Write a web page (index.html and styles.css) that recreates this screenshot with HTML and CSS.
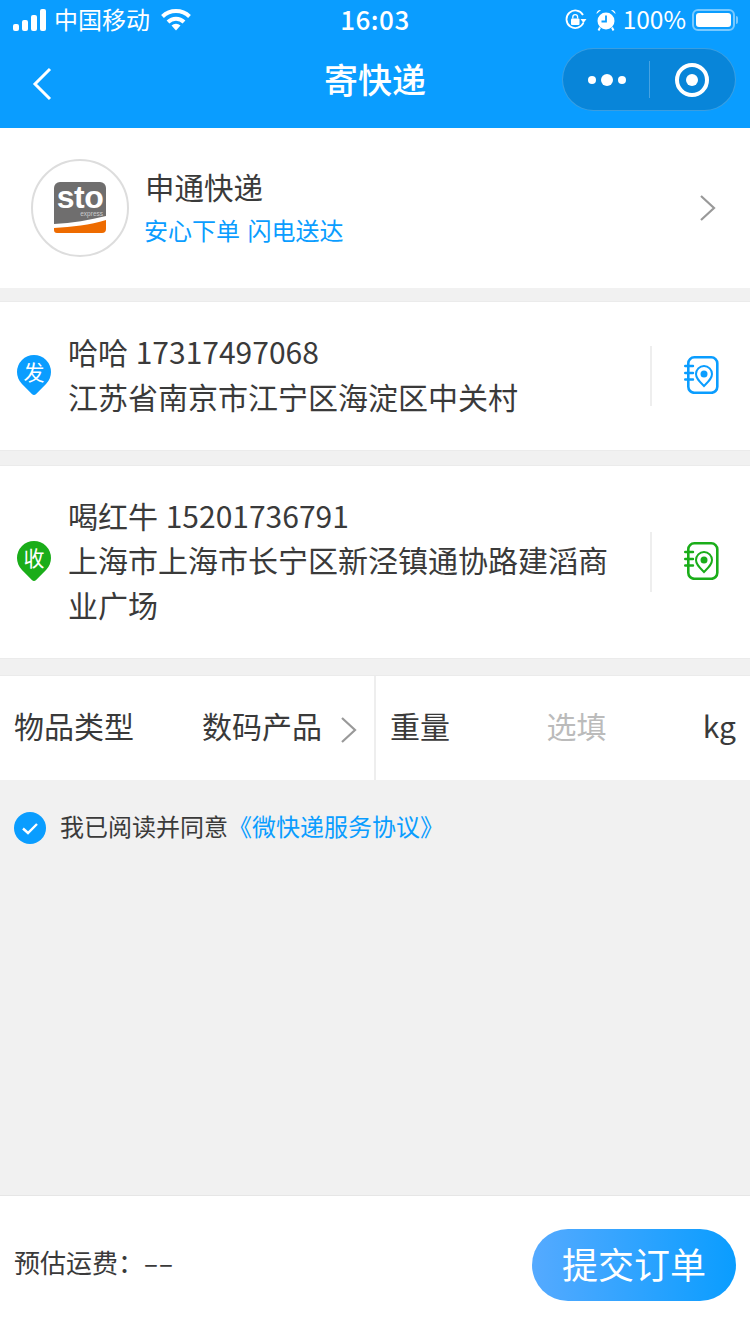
FILE: index.html
```html
<!DOCTYPE html>
<html lang="zh-CN">
<head>
    <meta charset="UTF-8">
    <meta name="viewport" content="width=device-width, initial-scale=1.0">
    <title>寄快递</title>
    <link rel="stylesheet" href="styles.css">
</head>
<body>
<div class="page">
    <header class="top">
        <div class="status-bar">
            <div class="status-left">
                <svg class="signal" width="33" height="22" viewBox="0 0 33 22">
                    <rect x="0" y="15" width="6" height="7" rx="2"/>
                    <rect x="9" y="11" width="6" height="11" rx="2"/>
                    <rect x="18" y="6" width="6" height="16" rx="2"/>
                    <rect x="27" y="0" width="6" height="22" rx="2"/>
                </svg>
                <span class="carrier">中国移动</span>
                <svg class="wifi" width="30" height="22" viewBox="0 0 30 22">
                    <path d="M1.500 7.500 A19.500 19.500 0 0 1 28.500 7.500" fill="none" stroke="#fff" stroke-width="4"/>
                    <path d="M7 13 A11.500 11.500 0 0 1 23 13" fill="none" stroke="#fff" stroke-width="4"/>
                    <path d="M10.500 16.500 A6.500 6.500 0 0 1 19.500 16.500 L15 21.500 Z" fill="#fff"/>
                </svg>
            </div>
            <div class="status-time">16:03</div>
            <div class="status-right">
                <svg width="22" height="22" viewBox="0 0 22 22">
                    <path d="M18.500 13.500 A8.800 8.800 0 1 1 18 6" fill="none" stroke="#fff" stroke-width="1.800"/>
                    <path d="M15.500 10 L21.500 10 L18.500 14 Z" fill="#fff"/>
                    <rect x="6" y="9.500" width="8.500" height="6.500" rx="1" fill="#fff"/>
                    <path d="M7.800 9.500 V8 a2.400 2.400 0 0 1 4.800 0 V9.500" fill="none" stroke="#fff" stroke-width="1.300"/>
                </svg>
                <svg class="alarm" width="20" height="22" viewBox="0 0 20 22">
                    <circle cx="10" cy="12" r="8.500" fill="#fff"/>
                    <path d="M10 6.500 V12.500 H5.500" fill="none" stroke="#0a9dff" stroke-width="1.800"/>
                    <path d="M0.500 5 A3.800 3.800 0 0 1 5 1 Z M19.500 5 A3.800 3.800 0 0 0 15 1 Z" fill="#fff"/>
                    <path d="M4 18.500 L2.500 21.500 M16 18.500 L17.500 21.500" stroke="#fff" stroke-width="2"/>
                </svg>
                <span class="battery-text">100%</span>
                <div class="battery"><div class="battery-fill"></div></div>
                <div class="battery-nub"></div>
            </div>
        </div>
        <div class="nav-bar">
            <svg class="nav-back" width="20" height="34" viewBox="0 0 20 34">
                <path d="M18 2 L3 17 L18 32" fill="none" stroke="#fff" stroke-width="3"/>
            </svg>
            <div class="nav-title">寄快递</div>
            <div class="capsule">
                <div class="capsule-more">
                    <span class="dot"></span><span class="dot dot-big"></span><span class="dot"></span>
                </div>
                <div class="capsule-line"></div>
                <div class="capsule-close"><span class="ring"></span></div>
            </div>
        </div>
    </header>

    <section class="company">
        <div class="company-logo">
            <svg class="logo-mark" width="52" height="52" viewBox="0 0 52 52">
                <path d="M6 0 H46 a6 6 0 0 1 6 6 V34 C36 38 18 41 0 42 V6 a6 6 0 0 1 6 -6 Z" fill="#6f6e6e"/>
                <path d="M52 38 V47 a4 4 0 0 1 -4 4 H3 a3 3 0 0 1 -3 -3 V46 C18 45 36 43 52 38 Z" fill="#ee6b00"/>
                <text class="logo-name" x="26" y="26" text-anchor="middle">sto</text>
                <text class="logo-sub" x="49" y="33.500" text-anchor="end">express</text>
            </svg>
        </div>
        <div class="company-info">
            <div class="company-name">申通快递</div>
            <div class="company-slogan">安心下单 闪电送达</div>
        </div>
        <svg class="company-arrow" width="18" height="28" viewBox="0 0 18 28">
            <path d="M2 2 L15 14 L2 26" fill="none" stroke="#999" stroke-width="2.200"/>
        </svg>
    </section>

    <section class="address address-send">
        <div class="pin pin-blue"><span class="pin-text">发</span></div>
        <div class="address-text">
            <div>哈哈 17317497068</div>
            <div>江苏省南京市江宁区海淀区中关村</div>
        </div>
        <div class="address-book book-blue">
            <svg class="book-icon" width="38" height="38" viewBox="0 0 38 38">
                <rect x="4.300" y="1.300" width="29" height="35.500" rx="6" fill="none" stroke="currentColor" stroke-width="2.600"/>
                <path d="M1.200 10 H9 M1.200 17 H9 M1.200 23.500 H9" stroke="currentColor" stroke-width="2.400" stroke-linecap="round"/>
                <path d="M20 30 C15.500 25.500 12 22.500 12 18 a8 8 0 0 1 16 0 C28 22.500 24.500 25.500 20 30 Z" fill="none" stroke="currentColor" stroke-width="2"/>
                <circle cx="20" cy="18" r="3.500" fill="currentColor"/>
            </svg>
        </div>
    </section>

    <section class="address address-receive">
        <div class="pin pin-green"><span class="pin-text">收</span></div>
        <div class="address-text">
            <div>喝红牛 15201736791</div>
            <div>上海市上海市长宁区新泾镇通协路建滔商业广场</div>
        </div>
        <div class="address-book book-green">
            <svg class="book-icon" width="38" height="38" viewBox="0 0 38 38">
                <rect x="4.300" y="1.300" width="29" height="35.500" rx="6" fill="none" stroke="currentColor" stroke-width="2.600"/>
                <path d="M1.200 10 H9 M1.200 17 H9 M1.200 23.500 H9" stroke="currentColor" stroke-width="2.400" stroke-linecap="round"/>
                <path d="M20 30 C15.500 25.500 12 22.500 12 18 a8 8 0 0 1 16 0 C28 22.500 24.500 25.500 20 30 Z" fill="none" stroke="currentColor" stroke-width="2"/>
                <circle cx="20" cy="18" r="3.500" fill="currentColor"/>
            </svg>
        </div>
    </section>

    <section class="goods">
        <div class="goods-type">
            <span>物品类型</span>
            <span class="goods-value">数码产品</span>
            <svg class="goods-arrow" width="18" height="28" viewBox="0 0 18 28">
                <path d="M2 2 L15 14 L2 26" fill="none" stroke="#999" stroke-width="2.200"/>
            </svg>
        </div>
        <div class="goods-weight">
            <span>重量</span>
            <span class="goods-placeholder">选填</span>
            <span>kg</span>
        </div>
    </section>

    <div class="agree">
        <svg class="agree-check" width="32" height="32" viewBox="0 0 32 32">
            <circle cx="16" cy="16" r="16" fill="#0a9dff"/>
            <path d="M9 16.500 L14 21 L23 12" fill="none" stroke="#fff" stroke-width="2.400"/>
        </svg>
        <div class="agree-text">我已阅读并同意<span class="agree-link">《微快递服务协议》</span></div>
    </div>

    <footer class="bottom">
        <div class="price">预估运费：<span class="price-value">––</span></div>
        <div class="submit">提交订单</div>
    </footer>
</div>
</body>
</html>
```

FILE: styles.css
```css
:root {
    --blue: #0a9dff;
    --green: #1aad19;
    --text: #3a3a3a;
    --page-bg: #f1f1f1;
    --line: #ebebeb;
    --font-cn: "Noto Sans CJK SC", "Noto Sans", sans-serif;
}
body {
    margin: 0;
    font-family: var(--font-cn);
    color: var(--text);
    background-color: var(--page-bg);
}
.page {
    width: 750px;
    height: 1334px;
    display: flex;
    flex-direction: column;
    overflow: hidden;
}

/* status bar + title bar */
.top {
    background: var(--blue);
    color: #fff;
    height: 128px;
    flex-shrink: 0;
}
.status-bar {
    height: 40px;
    display: flex;
    align-items: center;
    justify-content: space-between;
    padding: 0 12px 0 13px;
    position: relative;
}
.status-left, .status-right {
    display: flex;
    align-items: center;
}
.signal { fill: #fff; }
.carrier {
    font-size: 24px;
    margin-left: 8px;
    line-height: 38px;
    margin-bottom: 2px;
}
.wifi { margin-left: 11px; }
.status-time {
    position: absolute;
    left: 0;
    right: 0;
    top: 0;
    text-align: center;
    font-size: 26px;
    line-height: 38px;
    font-weight: 500;
    letter-spacing: 0.5px;
}
.alarm { margin-left: 9px; }
.battery-text {
    font-size: 24.500px;
    line-height: 38px;
    margin-left: 7px;
    margin-bottom: 2px;
}
.battery {
    width: 43px;
    height: 22px;
    box-sizing: border-box;
    margin-left: 6px;
    border: 2px solid rgba(255,255,255,0.45);
    border-radius: 6px;
    padding: 2px;
}
.battery-fill {
    height: 100%;
    background: #fff;
    border-radius: 3px;
}
.battery-nub {
    width: 2px;
    height: 8px;
    margin-left: 1px;
    background: rgba(255,255,255,0.45);
    border-radius: 0 2px 2px 0;
}
.nav-bar {
    height: 88px;
    display: flex;
    align-items: center;
    justify-content: space-between;
    padding: 0 14px 0 32px;
    position: relative;
}
.nav-title {
    position: absolute;
    left: 0;
    right: 0;
    top: 14px;
    text-align: center;
    font-size: 34px;
    line-height: 50px;
    font-weight: 500;
}
.capsule {
    width: 174px;
    height: 63px;
    box-sizing: border-box;
    margin-bottom: 9px;
    display: flex;
    align-items: center;
    background: rgba(0,0,0,0.15);
    border: 1px solid rgba(255,255,255,0.2);
    border-radius: 32px;
}
.capsule-more {
    width: 86px;
    padding-left: 2px;
    box-sizing: border-box;
    display: flex;
    align-items: center;
    justify-content: center;
    gap: 5px;
}
.dot {
    width: 8px;
    height: 8px;
    background: #fff;
    border-radius: 50%;
}
.dot-big {
    width: 12px;
    height: 12px;
}
.capsule-line {
    width: 1px;
    height: 37px;
    background: rgba(255,255,255,0.25);
}
.capsule-close {
    flex: 1;
    padding-right: 2px;
    display: flex;
    justify-content: center;
}
.ring {
    width: 34px;
    height: 34px;
    box-sizing: border-box;
    border: 4px solid #fff;
    border-radius: 50%;
    display: flex;
    align-items: center;
    justify-content: center;
}
.ring::after {
    content: "";
    width: 12px;
    height: 12px;
    background: #fff;
    border-radius: 50%;
}

/* courier row */
.company {
    height: 160px;
    flex-shrink: 0;
    box-sizing: border-box;
    background: #fff;
    display: flex;
    align-items: center;
    padding: 0 33px 0 31px;
}
.company-logo {
    width: 98px;
    height: 98px;
    box-sizing: border-box;
    border: 2px solid #ddd;
    border-radius: 50%;
    display: flex;
    align-items: center;
    justify-content: center;
}
.logo-mark { overflow: visible; }
.logo-name {
    font-family: "Liberation Sans", sans-serif;
    font-size: 32px;
    font-weight: bold;
    letter-spacing: -0.5px;
    fill: #fff;
}
.logo-sub {
    font-family: "Liberation Sans", sans-serif;
    font-size: 6.500px;
    fill: #ccc;
}
.company-info {
    flex: 1;
    margin-left: 16px;
}
.company-name {
    font-size: 29.500px;
    line-height: 44px;
}
.company-slogan {
    font-size: 24px;
    line-height: 44px;
    word-spacing: 2px;
    color: var(--blue);
    margin-left: -1px;
}

/* sender / receiver */
.address {
    flex-shrink: 0;
    box-sizing: border-box;
    background: #fff;
    display: flex;
    align-items: center;
    border-top: 1px solid var(--line);
    border-bottom: 1px solid var(--line);
}
.address-send {
    height: 150px;
    margin-top: 13px;
}
.address-receive {
    height: 194px;
    margin-top: 14px;
}
.pin {
    width: 34px;
    height: 34px;
    margin: -8px 17px 0 17px;
    flex-shrink: 0;
    color: #fff;
    font-size: 21px;
    line-height: 32px;
    text-align: center;
    position: relative;
}
/* teardrop: a rotated square with one sharp corner */
.pin::before {
    content: "";
    position: absolute;
    left: 0;
    top: 0;
    width: 34px;
    height: 34px;
    transform: rotate(45deg);
    border-radius: 50% 50% 3px 50%;
}
.pin-blue::before { background-color: var(--blue); }
.pin-green::before { background-color: var(--green); }
.pin-text { position: relative; }
.address-text {
    width: 565px;
    margin-top: -5px;
    font-size: 30px;
    line-height: 44.500px;
    word-spacing: 1px;
}
.address-book {
    width: 100px;
    height: 60px;
    box-sizing: border-box;
    margin-left: 17px;
    border-left: 2px solid #eee;
    display: flex;
    align-items: center;
    padding-left: 32px;
}
.book-icon { margin-bottom: 3px; }
.book-blue { color: var(--blue); }
.book-green { color: var(--green); }

/* goods row */
.goods {
    height: 105px;
    flex-shrink: 0;
    box-sizing: border-box;
    margin-top: 16px;
    background: #fff;
    border-top: 1px solid var(--line);
    display: flex;
    font-size: 30px;
}
.goods-type {
    width: 376px;
    box-sizing: border-box;
    border-right: 2px solid #eee;
    padding: 0 16px 6px 14px;
    display: flex;
    align-items: center;
}
.goods-value { margin-left: auto; }
.goods-arrow { margin: 10px 0 0 18px; }
.goods-weight {
    flex: 1;
    padding: 0 14px 6px 14px;
    display: flex;
    align-items: center;
}
.goods-placeholder {
    flex: 1;
    text-align: center;
    color: #bbb;
}

/* agreement */
.agree {
    flex-shrink: 0;
    display: flex;
    align-items: center;
    padding: 30px 14px 0;
    font-size: 24px;
    line-height: 32px;
}
.agree-check { margin: 2px 14px 0 0; }
.agree-text { margin-bottom: 2px; }
.agree-link { color: var(--blue); }

/* price and submit */
.bottom {
    margin-top: auto;
    height: 139px;
    flex-shrink: 0;
    box-sizing: border-box;
    background: #fff;
    border-top: 1px solid #e6e6e6;
    display: flex;
    align-items: center;
    justify-content: space-between;
    padding: 0 14px;
}
.price { font-size: 26px; margin-bottom: 8px; }
.price-value { letter-spacing: 1px; }
.submit {
    width: 204px;
    height: 72px;
    border-radius: 36px;
    background: linear-gradient(to right, #55aaff, #0a9dff);
    color: #fff;
    font-size: 36px;
    line-height: 68px;
    text-align: center;
}
```
